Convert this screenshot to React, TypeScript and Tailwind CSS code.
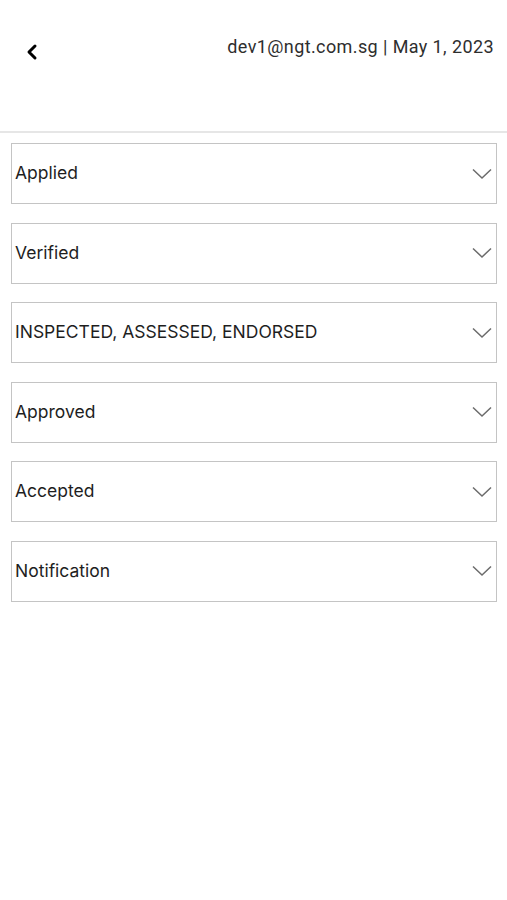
import { ChevronLeft } from "lucide-react";

const sections = [
  "Applied",
  "Verified",
  "INSPECTED, ASSESSED, ENDORSED",
  "Approved",
  "Accepted",
  "Notification",
];

function Chevron() {
  return (
    <svg width="20" height="12" viewBox="0 0 20 12" fill="none">
      <path d="M1 1.5 L10 10 L19 1.5" stroke="#6b6b6b" strokeWidth="1.5" />
    </svg>
  );
}

export default function App() {
  return (
    <div className="w-[507px] h-[900px] bg-white font-['Roboto',sans-serif]">
      <div className="h-[131px] flex items-start justify-between pl-[20px] pr-[13px] pt-[33px]">
        <button className="mt-[7px] text-black">
          <ChevronLeft size={24} strokeWidth={3} />
        </button>
        <span className="text-[18px] text-[#2e2e2e] tracking-[0.4px]">
          dev1@ngt.com.sg | May 1, 2023
        </span>
      </div>
      <div className="h-[2px] bg-[#e6e6e6]" />
      <div className="flex flex-col gap-[18.5px] pl-[11px] pr-[10px] pt-[10px]">
        {sections.map((s) => (
          <div
            key={s}
            className="h-[61px] border border-[#c4c4c4] flex items-center justify-between pl-[3px] pr-[4px]"
          >
            <span className="text-[17.5px] text-[#1e1e1e] font-['Inter',sans-serif]">
              {s}
            </span>
            <Chevron />
          </div>
        ))}
      </div>
    </div>
  );
}
